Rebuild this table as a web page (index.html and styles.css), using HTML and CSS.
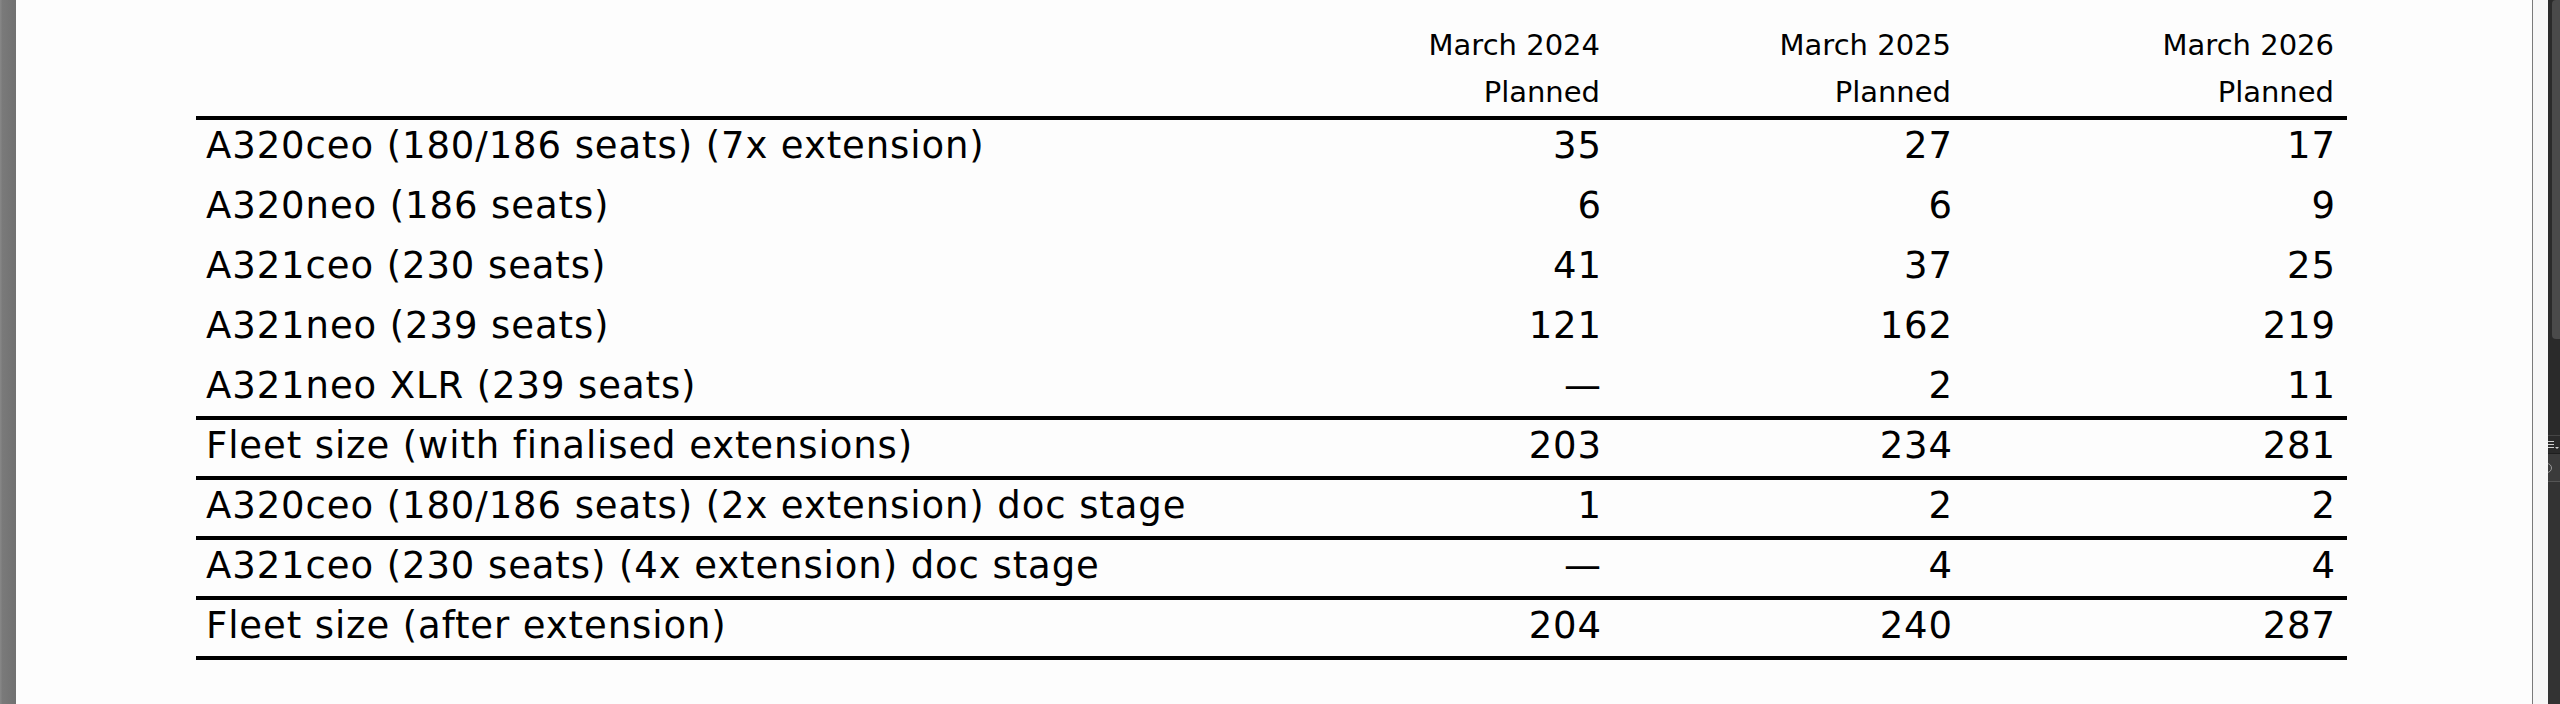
FILE: index.html
```html
<!DOCTYPE html>
<html lang="en">
<head>
<meta charset="utf-8">
<title>Fleet plan</title>
<link rel="stylesheet" href="styles.css">
</head>
<body>
<div class="gutter"></div>
<main class="page">
  <table class="fleet">
    <colgroup>
      <col class="c-label">
      <col class="c-num">
      <col class="c-num">
      <col class="c-last">
    </colgroup>
    <thead>
      <tr>
        <th class="lbl"></th>
        <th>March 2024<br>Planned</th>
        <th>March 2025<br>Planned</th>
        <th>March 2026<br>Planned</th>
      </tr>
    </thead>
    <tbody>
      <tr><td class="lbl">A320ceo (180/186 seats) (7x extension)</td><td>35</td><td>27</td><td>17</td></tr>
      <tr><td class="lbl">A320neo (186 seats)</td><td>6</td><td>6</td><td>9</td></tr>
      <tr><td class="lbl">A321ceo (230 seats)</td><td>41</td><td>37</td><td>25</td></tr>
      <tr><td class="lbl">A321neo (239 seats)</td><td>121</td><td>162</td><td>219</td></tr>
      <tr class="rule"><td class="lbl">A321neo XLR (239 seats)</td><td>—</td><td>2</td><td>11</td></tr>
      <tr class="rule"><td class="lbl">Fleet size (with finalised extensions)</td><td>203</td><td>234</td><td>281</td></tr>
      <tr class="rule"><td class="lbl">A320ceo (180/186 seats) (2x extension) doc stage</td><td>1</td><td>2</td><td>2</td></tr>
      <tr class="rule"><td class="lbl">A321ceo (230 seats) (4x extension) doc stage</td><td>—</td><td>4</td><td>4</td></tr>
      <tr class="rule"><td class="lbl">Fleet size (after extension)</td><td>204</td><td>240</td><td>287</td></tr>
    </tbody>
  </table>
</main>
<div class="edge"></div>
<div class="strip"></div>
<aside class="panel">
  <div class="track"><div class="thumb"></div></div>
  <div class="tool"><span class="bars"></span><span class="caret"></span></div>
  <div class="tool2"><span class="ring"></span></div>
  <div class="rest"></div>
</aside>
</body>
</html>
```

FILE: styles.css
```css
html, body {
  margin: 0;
  padding: 0;
  height: 100%;
  background: #fff;
}
body {
  display: flex;
  height: 704px;
  overflow: hidden;
  font-family: "DejaVu Sans", Verdana, sans-serif;
  color: #000;
}
.gutter {
  width: 16px;
  flex: none;
  background: linear-gradient(to right, #858585 0, #858585 1px, #7a7a7a 2px, #717171 16px);
}
.page {
  flex: 1;
  background: #fdfdfd;
  padding: 22px 0 0 180px;
  box-sizing: border-box;
}
.edge {
  width: 1px;
  flex: none;
  background: #7a7a7a;
}
.strip {
  width: 15px;
  flex: none;
  background: #f7f7f7;
}
.panel {
  width: 12px;
  flex: none;
  display: flex;
  flex-direction: column;
  background: #2a2a2a;
  overflow: hidden;
}
.track {
  height: 435px;
  flex: none;
  padding-left: 4px;
  box-sizing: border-box;
}
.thumb {
  width: 10px;
  height: 339px;
  background: #4a4a4a;
  border-radius: 4px 0 0 4px;
}
.tool {
  height: 17px;
  flex: none;
  border-top: 1px solid #454545;
  display: flex;
  align-items: center;
  gap: 1px;
}
.bars {
  width: 6px;
  height: 5px;
  border-top: 1px solid #cfcfcf;
  border-bottom: 1px solid #cfcfcf;
  position: relative;
  flex: none;
}
.bars::after {
  content: "";
  position: absolute;
  left: 0;
  right: 0;
  top: 2px;
  border-top: 1px solid #cfcfcf;
}
.caret {
  width: 0;
  height: 0;
  border-left: 2px solid transparent;
  border-right: 2px solid transparent;
  border-top: 2px solid #cfcfcf;
  margin-top: 6px;
  flex: none;
}
.tool2 {
  height: 27px;
  flex: none;
  background: #3b3b3b;
  border-top: 1px solid #1e1e1e;
  border-bottom: 1px solid #555;
  display: flex;
  align-items: center;
}
.ring {
  width: 8px;
  height: 8px;
  border: 1px solid #9a9a9a;
  border-radius: 50%;
  margin-left: -6px;
  flex: none;
}
.rest {
  flex: 1;
  background: #333;
}

.fleet {
  border-collapse: separate;
  border-spacing: 0;
  table-layout: fixed;
  width: 2151px;
}
.c-label { width: 1066px; }
.c-num { width: 351px; }
.c-last { width: 383px; }

.fleet th {
  font-weight: normal;
  font-size: 29px;
  line-height: 47px;
  text-align: right;
  padding: 0 13px 0 10px;
  border-bottom: 4px solid #000;
  white-space: nowrap;
}
.fleet td {
  font-size: 37px;
  line-height: 41px;
  letter-spacing: 0.9px;
  text-align: right;
  padding: 5px 11px 10px 10px;
  border-bottom: 4px solid transparent;
  white-space: nowrap;
}
.fleet td.lbl {
  text-align: left;
}
.fleet tr.rule td {
  border-bottom-color: #000;
}
```
